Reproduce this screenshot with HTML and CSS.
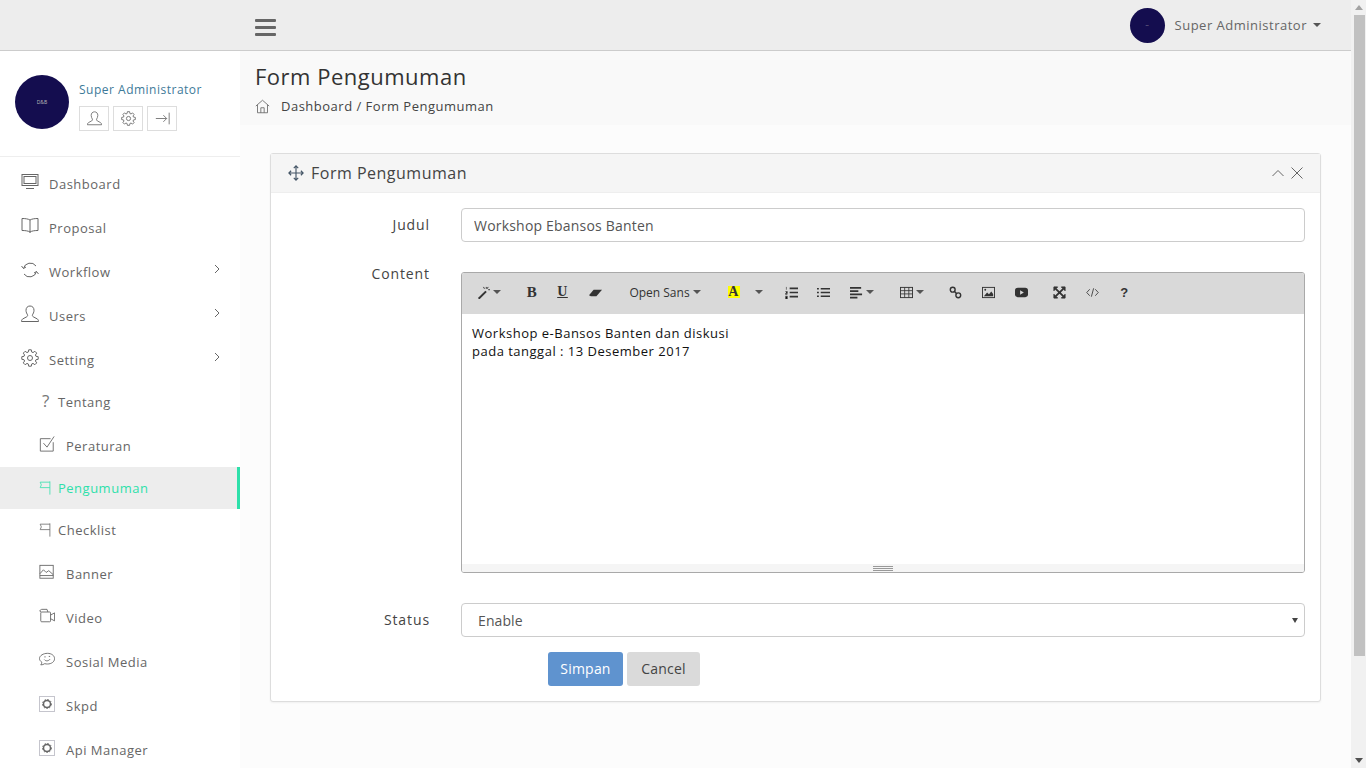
FILE: index.html
```html
<!DOCTYPE html>
<html lang="en">
<head>
    <meta charset="UTF-8">
    <meta name="viewport" content="width=device-width, initial-scale=1.0">
    <title>Form Pengumuman</title>
    <link rel="stylesheet" href="styles.css">
</head>
<body>
<svg class="defs" width="0" height="0">
    <symbol id="i-screen" viewBox="0 0 18 18"><rect x="1" y="1.5" width="16" height="11"/><rect x="3" y="3.5" width="12" height="7"/><path d="M5 15.500h8"/></symbol>
    <symbol id="i-book" viewBox="0 0 18 18"><path d="M9 3C7 1.800 4 1.500 1 1.500v12c3 0 6 .3 8 1.500 2-1.200 5-1.500 8-1.500v-12c-3 0-6 .3-8 1.500zM9 3v13"/></symbol>
    <symbol id="i-refresh" viewBox="0 0 18 18"><path d="M2.500 7.500A7 7 0 0 1 15 5M15.500 10.500A7 7 0 0 1 3 13"/><path d="M.5 5l2 2.500L5 6M17.500 13l-2-2.500L13 12"/></symbol>
    <symbol id="i-user" viewBox="0 0 18 18"><path d="M9 1c-2.500 0-4 1.800-4 4.300 0 2 1 3.500 1.500 4.500.3.800 0 1.500-.8 2l-3.700 2c-.8.500-1.500 1-1.500 2.700h17c0-1.700-.7-2.200-1.500-2.700l-3.700-2c-.8-.5-1.100-1.200-.8-2 .5-1 1.500-2.500 1.500-4.500C13 2.800 11.500 1 9 1z"/></symbol>
    <symbol id="i-gear" viewBox="0 0 18 18"><circle cx="9" cy="9" r="2.500"/><path stroke-linejoin="round" d="M7.290 3.040 7.700.8h2.600l.41 2.240 1.300.54 1.870-1.290 1.830 1.830-1.290 1.870.54 1.300 2.240.41v2.600l-2.240.41-.54 1.300 1.290 1.870-1.830 1.830-1.870-1.290-1.300.54-.41 2.240H7.700l-.41-2.240-1.300-.54-1.870 1.290-1.830-1.830 1.290-1.870-.54-1.300L.8 10.300V7.700l2.240-.41.54-1.300-1.290-1.870L4.120 2.290l1.870 1.290z"/></symbol>
    <symbol id="i-logout" viewBox="0 0 18 18"><path d="M1 9h13M10 5l4 4-4 4M17 2v14"/></symbol>
    <symbol id="i-check" viewBox="0 0 18 18"><path d="M16 7v10H1.500V3H13"/><path d="M5 8l4 4.500L17 .5"/></symbol>
    <symbol id="i-flag" viewBox="0 0 18 18"><path d="M14 .5v17M14 1.500H1.500L3 5 1.500 8.500H14"/></symbol>
    <symbol id="i-picture" viewBox="0 0 18 18"><rect x="1" y="1.500" width="15" height="14.500"/><path d="M1 13h15M1 11l4-4.500 3 3 3-2 5 4.500"/></symbol>
    <symbol id="i-video" viewBox="0 0 18 18"><rect x="2" y="4.500" width="11" height="11" rx="1"/><path d="M13 8l4.500-2.500v9L13 12M2 4.500.8 3 3 1.500h6L10 4.500"/></symbol>
    <symbol id="i-smile" viewBox="0 0 18 18"><path d="M9.500 1.500c4.500 0 8 2.500 8 6s-3.500 6-8 6c-1 0-2-.1-3-.4-1.200.9-3 1.400-4.500 1.400.6-.8 1.200-1.800 1.200-2.900C1.800 10.500.5 9 .5 7.500.5 4 5 1.500 9.500 1.500z"/><path d="M6 8.500c1.500 2 4.500 2 6.500-.5M6 5.500h1.500M11 5h1.500"/></symbol>
    <symbol id="i-home" viewBox="0 0 18 18"><path d="M1 8.500 9 1.500l8 7M3 7v9.500h12V7M7 16.500v-6h4v6"/></symbol>
    <symbol id="i-move" viewBox="0 0 18 18"><path d="M9 1v16M1 9h16M6.500 3.500 9 1l2.500 2.500M6.500 14.500 9 17l2.500-2.500M3.500 6.500 1 9l2.500 2.500M14.500 6.500 17 9l-2.500 2.500"/></symbol>
    <symbol id="i-up" viewBox="0 0 14 14"><path d="M1.500 10 7 4.500 12.500 10"/></symbol>
    <symbol id="i-close" viewBox="0 0 14 14"><path d="M1.500 1.500l11 11M12.500 1.500l-11 11"/></symbol>
    <symbol id="i-chevron" viewBox="0 0 8 10"><path d="M2 1l4 4-4 4"/></symbol>
    <symbol id="i-service" viewBox="0 0 16 16"><rect class="dots" x=".5" y=".5" width="15" height="15"/><circle class="cog-ring" cx="8" cy="8" r="3.500"/><circle class="cog-teeth" cx="8" cy="8" r="4.500"/></symbol>
    <symbol id="t-wand" viewBox="0 0 14 14"><path d="M1 13 9 5l1.500 1.500-8 8-1.500-1.500z" fill="#333" stroke="none"/><path d="M10 1v2M12 4h2M7 1l1 2M12 1l-1 2" stroke="#333"/></symbol>
    <symbol id="t-eraser" viewBox="0 0 14 14"><path d="M0 10 5 4h9L8 11H2z" fill="#333"/></symbol>
    <symbol id="t-ol" viewBox="0 0 14 14"><path d="M5 2.500h9M5 7h9M5 11.500h9" stroke="#333" stroke-width="1.800"/><path d="M1.500 1v3M.5 6h2v2h-2v1h2M.5 11h2v3h-2" stroke="#555" stroke-width=".8"/></symbol>
    <symbol id="t-ul" viewBox="0 0 14 14"><path d="M4 3h10M4 7h10M4 11h10M0 3h2M0 7h2M0 11h2" stroke="#333" stroke-width="1.800"/></symbol>
    <symbol id="t-align" viewBox="0 0 14 14"><path d="M0 2h12M0 5.500h9M0 9h13M0 12.500h8" stroke="#333" stroke-width="1.700"/></symbol>
    <symbol id="t-table" viewBox="0 0 14 14"><rect x=".5" y="1.500" width="13" height="11" fill="none" stroke="#333"/><path d="M.5 5h13M.5 8.500h13M5 1.500v11M9.500 1.500v11" stroke="#333" stroke-width=".9"/></symbol>
    <symbol id="t-link" viewBox="0 0 14 14"><circle cx="4" cy="4" r="2.600" fill="none" stroke="#333" stroke-width="1.500"/><circle cx="10" cy="10" r="2.600" fill="none" stroke="#333" stroke-width="1.500"/><path d="M5.500 5.500l3 3" stroke="#333" stroke-width="1.500"/></symbol>
    <symbol id="t-image" viewBox="0 0 14 14"><rect x=".5" y="1.500" width="13" height="11" fill="none" stroke="#333"/><path d="M2 11l3.500-4 2 2 2.500-3 2 2.500V11z" fill="#333"/><circle cx="3.500" cy="4" r="1" fill="#333"/></symbol>
    <symbol id="t-video" viewBox="0 0 14 14"><rect y="2" width="14" height="10" rx="3" fill="#333"/><path d="M5.500 4.500v5l4-2.500z" fill="#d9d9d9"/></symbol>
    <symbol id="t-full" viewBox="0 0 14 14"><path d="M3 3l8 8M11 3l-8 8" stroke="#333" stroke-width="2"/><path d="M1 1h4L1 5zM13 1H9l4 4zM1 13h4l-4-4zM13 13H9l4-4z" fill="#333" stroke="#333"/></symbol>
    <symbol id="t-code" viewBox="0 0 14 14"><path d="M4 3.500.8 7 4 10.500M10 3.500 13.200 7 10 10.500M8.200 2.500 5.800 11.500" fill="none" stroke="#333" stroke-width=".9"/></symbol>
</svg>

<div class="screen">
    <div class="window">
        <header class="topbar">
            <div class="hamburger"><span></span><span></span><span></span></div>
            <div class="top-user">
                <div class="avatar avatar-small">--</div>
                <span class="top-user-name">Super Administrator</span>
                <span class="caret"></span>
            </div>
        </header>

        <div class="body-row">
            <aside class="sidebar">
                <div class="profile">
                    <div class="avatar avatar-big">D&amp;B</div>
                    <div>
                        <div class="profile-name">Super Administrator</div>
                        <div class="profile-actions">
                            <a class="profile-btn"><svg class="ico"><use href="#i-user"/></svg></a>
                            <a class="profile-btn"><svg class="ico"><use href="#i-gear"/></svg></a>
                            <a class="profile-btn"><svg class="ico"><use href="#i-logout"/></svg></a>
                        </div>
                    </div>
                </div>
                <ul class="menu">
                    <li class="menu-item"><svg class="ico menu-ico"><use href="#i-screen"/></svg>Dashboard</li>
                    <li class="menu-item"><svg class="ico menu-ico"><use href="#i-book"/></svg>Proposal</li>
                    <li class="menu-item"><svg class="ico menu-ico"><use href="#i-refresh"/></svg>Workflow<svg class="ico chevron"><use href="#i-chevron"/></svg></li>
                    <li class="menu-item"><svg class="ico menu-ico"><use href="#i-user"/></svg>Users<svg class="ico chevron"><use href="#i-chevron"/></svg></li>
                    <li class="menu-item"><svg class="ico menu-ico"><use href="#i-gear"/></svg>Setting<svg class="ico chevron"><use href="#i-chevron"/></svg></li>
                    <li class="sub-item sub-short"><span class="sub-q">?</span>Tentang</li>
                    <li class="sub-item"><svg class="ico sub-ico"><use href="#i-check"/></svg>Peraturan</li>
                    <li class="sub-item sub-short active"><svg class="ico flag-ico"><use href="#i-flag"/></svg>Pengumuman</li>
                    <li class="sub-item sub-short"><svg class="ico flag-ico"><use href="#i-flag"/></svg>Checklist</li>
                    <li class="sub-item"><svg class="ico sub-ico"><use href="#i-picture"/></svg>Banner</li>
                    <li class="sub-item"><svg class="ico sub-ico"><use href="#i-video"/></svg>Video</li>
                    <li class="sub-item"><svg class="ico sub-ico"><use href="#i-smile"/></svg>Sosial Media</li>
                    <li class="sub-item"><svg class="ico sub-ico"><use href="#i-service"/></svg>Skpd</li>
                    <li class="sub-item"><svg class="ico sub-ico"><use href="#i-service"/></svg>Api Manager</li>
                </ul>
            </aside>

            <main class="content">
                <div class="page-head">
                    <h1>Form Pengumuman</h1>
                    <div class="crumbs"><svg class="ico home-ico"><use href="#i-home"/></svg>Dashboard / Form Pengumuman</div>
                </div>

                <section class="panel">
                    <div class="panel-head">
                        <svg class="ico move-ico"><use href="#i-move"/></svg>
                        <span class="panel-title">Form Pengumuman</span>
                        <svg class="ico tool-ico"><use href="#i-up"/></svg>
                        <svg class="ico tool-ico"><use href="#i-close"/></svg>
                    </div>
                    <form class="form">
                        <label class="form-label" for="judul">Judul</label>
                        <input class="input" id="judul" type="text" value="Workshop Ebansos Banten">

                        <label class="form-label form-label-top">Content</label>
                        <div class="editor">
                            <div class="toolbar">
                                <span class="tb tb-wand"><svg class="tb-ico"><use href="#t-wand"/></svg><span class="caret"></span></span>
                                <span class="tb tb-b">B</span>
                                <span class="tb tb-u">U</span>
                                <span class="tb"><svg class="tb-ico"><use href="#t-eraser"/></svg></span>
                                <span class="tb tb-font">Open Sans<span class="caret"></span></span>
                                <span class="tb tb-color"><span class="color-a">A</span></span>
                                <span class="tb tb-colorcaret"><span class="caret"></span></span>
                                <span class="tb tb-ol"><svg class="tb-ico"><use href="#t-ol"/></svg></span>
                                <span class="tb tb-ul"><svg class="tb-ico"><use href="#t-ul"/></svg></span>
                                <span class="tb tb-align"><svg class="tb-ico"><use href="#t-align"/></svg><span class="caret"></span></span>
                                <span class="tb tb-table"><svg class="tb-ico"><use href="#t-table"/></svg><span class="caret"></span></span>
                                <span class="tb tb-link"><svg class="tb-ico"><use href="#t-link"/></svg></span>
                                <span class="tb"><svg class="tb-ico"><use href="#t-image"/></svg></span>
                                <span class="tb"><svg class="tb-ico"><use href="#t-video"/></svg></span>
                                <span class="tb tb-full"><svg class="tb-ico"><use href="#t-full"/></svg></span>
                                <span class="tb"><svg class="tb-ico"><use href="#t-code"/></svg></span>
                                <span class="tb tb-help">?</span>
                            </div>
                            <div class="editor-text">
                                <p>Workshop e-Bansos Banten dan diskusi</p>
                                <p>pada tanggal : 13 Desember 2017</p>
                            </div>
                            <div class="editor-status"><span class="grip"></span></div>
                        </div>

                        <label class="form-label" for="status">Status</label>
                        <div class="select" id="status">Enable<span class="select-arrow"></span></div>

                        <div class="form-actions">
                            <button class="btn btn-save" type="button">Simpan</button>
                            <button class="btn btn-cancel" type="button">Cancel</button>
                        </div>
                    </form>
                </section>
            </main>
        </div>
    </div>

    <div class="scrollbar">
        <span class="scroll-up"></span>
        <span class="scroll-thumb"></span>
        <span class="scroll-down"></span>
    </div>
</div>
</body>
</html>
```

FILE: styles.css
```css
* {
  box-sizing: border-box;
}
html, body {
  margin: 0;
  height: 768px;
  overflow: hidden;
}
body {
  font-family: "Open Sans", sans-serif;
  font-size: 13px;
  letter-spacing: .5px;
  color: #555;
  background: #fcfcfc;
}
.defs {
  position: absolute;
}
.screen {
  display: flex;
  height: 768px;
}
.window {
  width: 1351px;
  display: flex;
  flex-direction: column;
}
.ico {
  fill: none;
  stroke: #666;
  stroke-width: 1;
}
.dots {
  stroke: #8a8a9a;
  stroke-dasharray: 1 1;
}
.cog-ring {
  stroke-width: 1.500;
}
.cog-teeth {
  stroke-width: 1;
  stroke-dasharray: 1.500 1.500;
}

/* top bar */
.topbar {
  height: 51px;
  flex: none;
  background: #ededed;
  border-bottom: 1px solid #ccc;
  display: flex;
  align-items: center;
  padding-left: 255px;
}
.hamburger {
  width: 21px;
  display: flex;
  flex-direction: column;
  gap: 4px;
  margin-top: 4px;
}
.hamburger span {
  height: 3px;
  background: #666;
  border-radius: 1px;
}
.top-user {
  margin-left: auto;
  display: flex;
  align-items: center;
  padding-right: 30px;
  color: #666;
}
.top-user-name {
  margin-left: 10px;
}
.top-user .caret {
  margin-left: 6px;
}
.avatar {
  border-radius: 50%;
  background: #140d4f;
  color: #bbb;
  display: flex;
  align-items: center;
  justify-content: center;
  letter-spacing: 0;
  flex: none;
}
.avatar-small {
  width: 35px;
  height: 35px;
  font-size: 5px;
}
.avatar-big {
  width: 54px;
  height: 54px;
  font-size: 5px;
}
.caret {
  display: inline-block;
  width: 0;
  height: 0;
  border-top: 4px solid #555;
  border-left: 4px solid transparent;
  border-right: 4px solid transparent;
  vertical-align: middle;
}

/* sidebar */
.body-row {
  flex: 1;
  display: flex;
  min-height: 0;
}
.sidebar {
  width: 240px;
  flex: none;
  background: #fff;
  overflow: hidden;
}
.profile {
  height: 106px;
  border-bottom: 1px solid #eee;
  padding: 24px 15px 0;
  display: flex;
  gap: 10px;
}
.profile-name {
  font-size: 12px;
  color: #3d7a99;
  line-height: 18px;
  margin-top: 6px;
}
.profile-actions {
  display: flex;
  gap: 4px;
  margin-top: 7px;
}
.profile-btn {
  width: 30px;
  height: 25px;
  border: 1px solid #ddd;
  display: flex;
  align-items: center;
  justify-content: center;
}
.profile-btn .ico {
  width: 15px;
  height: 15px;
}
.menu {
  list-style: none;
  margin: 4px 0 0;
  padding: 0;
}
.menu-item,
.sub-item {
  height: 44px;
  padding-top: 2px;
  display: flex;
  align-items: center;
  color: #666;
}
.menu-item {
  padding-left: 21px;
}
.menu-ico {
  width: 18px;
  height: 18px;
  margin-right: 10px;
  margin-top: -4px;
}
.chevron {
  width: 8px;
  height: 10px;
  margin-left: auto;
  margin-right: 19px;
  margin-top: -7px;
}
.sub-item {
  padding-left: 39px;
}
.sub-short {
  height: 42px;
  padding-top: 0;
}
.sub-q {
  width: 19px;
  padding-left: 3px;
  font-size: 17px;
  color: #777;
  margin-top: -3px;
}
.sub-ico {
  width: 16px;
  height: 16px;
  margin-right: 11px;
  margin-top: -5px;
}
.flag-ico {
  width: 14px;
  height: 14px;
  margin-right: 5px;
  margin-top: -1px;
  overflow: visible;
}
.active {
  background: #ededed;
  color: #2ee0aa;
  border-right: 3px solid #2ee0aa;
}
.active .ico {
  stroke: #2ee0aa;
}

/* content */
.content {
  flex: 1;
  min-width: 0;
}
.page-head {
  height: 74px;
  background: #f9f9f9;
  padding: 10px 15px 0;
}
h1 {
  margin: 0;
  font-size: 22px;
  font-weight: 400;
  line-height: 30px;
  color: #333;
}
.crumbs {
  display: flex;
  align-items: center;
  margin-top: 6px;
  color: #444;
}
.home-ico {
  width: 15px;
  height: 15px;
  margin-right: 11px;
}
.panel {
  margin: 28px 30px 0;
  background: #fff;
  border: 1px solid #ddd;
  border-radius: 3px;
  box-shadow: 0 1px 2px rgba(0, 0, 0, .05);
}
.panel-head {
  height: 39px;
  background: #f5f5f5;
  border-bottom: 1px solid #eee;
  display: flex;
  align-items: center;
  padding: 0 16px 0 17px;
}
.move-ico {
  width: 16px;
  height: 16px;
  margin-right: 7px;
  stroke: #456;
  stroke-width: 1.300;
}
.panel-title {
  font-size: 16px;
  color: #444;
  margin-right: auto;
}
.tool-ico {
  width: 14px;
  height: 14px;
  margin-left: 5px;
  stroke: #666;
}
.form {
  display: grid;
  grid-template-columns: 159px 844px;
  column-gap: 31px;
  row-gap: 30px;
  padding: 15px 0;
}
.form-label {
  text-align: right;
  font-size: 14px;
  letter-spacing: .9px;
  color: #444;
  line-height: 34px;
}
.form-label-top {
  line-height: 14px;
  margin-top: -5px;
}
.input,
.select {
  height: 34px;
  border: 1px solid #ccc;
  border-radius: 4px;
  background: #fff;
  font-family: inherit;
  font-size: 14px;
  letter-spacing: .2px;
  color: #555;
  padding: 0 12px;
}
.select {
  position: relative;
  display: flex;
  align-items: center;
  padding-left: 16px;
  letter-spacing: .1px;
}
.select-arrow {
  position: absolute;
  right: 6px;
  top: 14px;
  border-top: 5px solid #444;
  border-left: 3.500px solid transparent;
  border-right: 3.500px solid transparent;
}

/* editor */
.editor {
  height: 301px;
  border: 1px solid #a9a9a9;
  border-radius: 3px;
  display: flex;
  flex-direction: column;
  overflow: hidden;
}
.toolbar {
  height: 41px;
  flex: none;
  background: #d9d9d9;
  display: flex;
  align-items: center;
  padding-left: 6px;
  padding-bottom: 3px;
  color: #333;
}
.tb {
  width: 33px;
  height: 22px;
  display: flex;
  align-items: center;
  justify-content: center;
  gap: 3px;
  flex: none;
}
.tb-ico {
  width: 13px;
  height: 13px;
}
.tb-wand {
  width: 42px;
  margin-right: 9px;
}
.tb-b {
  width: 26px;
  font: bold 15px "Liberation Serif", serif;
}
.tb-u {
  margin-left: 1px;
  font: bold 14px "Liberation Serif", serif;
  text-decoration: underline;
}
.tb-font {
  width: 82px;
  margin-left: 12px;
  font-size: 12px;
  letter-spacing: 0;
}
.tb-color {
  margin-left: 11px;
}
.color-a {
  background: #ff0;
  font: bold 14px "Liberation Serif", serif;
  width: 12px;
  height: 12px;
  line-height: 12px;
  text-align: center;
}
.tb-colorcaret {
  width: 17px;
}
.tb-ol {
  margin-left: 8px;
}
.tb-ul {
  margin-left: -1px;
}
.tb-align {
  width: 35px;
  margin-left: 4px;
}
.tb-table {
  width: 35px;
  margin-left: 15px;
}
.tb-link {
  margin-left: 10px;
}
.tb-full {
  margin-left: 5px;
}
.tb-help {
  font: bold 13px "Liberation Sans", sans-serif;
  margin-left: -1px;
}
.editor-text {
  flex: 1;
  padding: 10px;
  font-size: 13px;
  color: #111;
  line-height: 18px;
}
.editor-text p {
  margin: 0;
}
.editor-status {
  height: 8px;
  flex: none;
  background: #f5f5f5;
  display: flex;
  justify-content: center;
  align-items: center;
}
.grip {
  width: 20px;
  height: 5px;
  border-top: 1px solid #999;
  border-bottom: 1px solid #999;
  background: linear-gradient(#f5f5f5 1px, #999 1px, #999 2px, #f5f5f5 2px);
}
.form-actions {
  grid-column: 1 / 3;
  display: flex;
  gap: 4px;
  padding-left: 277px;
  margin-top: -15px;
}
.btn {
  height: 34px;
  border: none;
  border-radius: 3px;
  font-family: inherit;
  font-size: 14px;
  letter-spacing: .2px;
  padding: 0 0 2px;
}
.btn-save {
  width: 75px;
  background: #5f93cf;
  color: #fff;
}
.btn-cancel {
  width: 73px;
  background: #dadada;
  color: #444;
}

/* the page scrollbar */
.scrollbar {
  width: 15px;
  flex: none;
  background: #f1f1f1;
  display: flex;
  flex-direction: column;
  align-items: center;
  padding-top: 5px;
}
.scroll-up {
  border-bottom: 5px solid #a3a3a3;
  border-left: 4px solid transparent;
  border-right: 4px solid transparent;
  margin-left: 1px;
}
.scroll-thumb {
  width: 11px;
  height: 641px;
  margin-top: 5px;
  margin-left: 1px;
  background: #c1c1c1;
}
.scroll-down {
  margin-top: auto;
  margin-bottom: 5px;
  margin-left: 1px;
  border-top: 5px solid #505050;
  border-left: 4px solid transparent;
  border-right: 4px solid transparent;
}
```
